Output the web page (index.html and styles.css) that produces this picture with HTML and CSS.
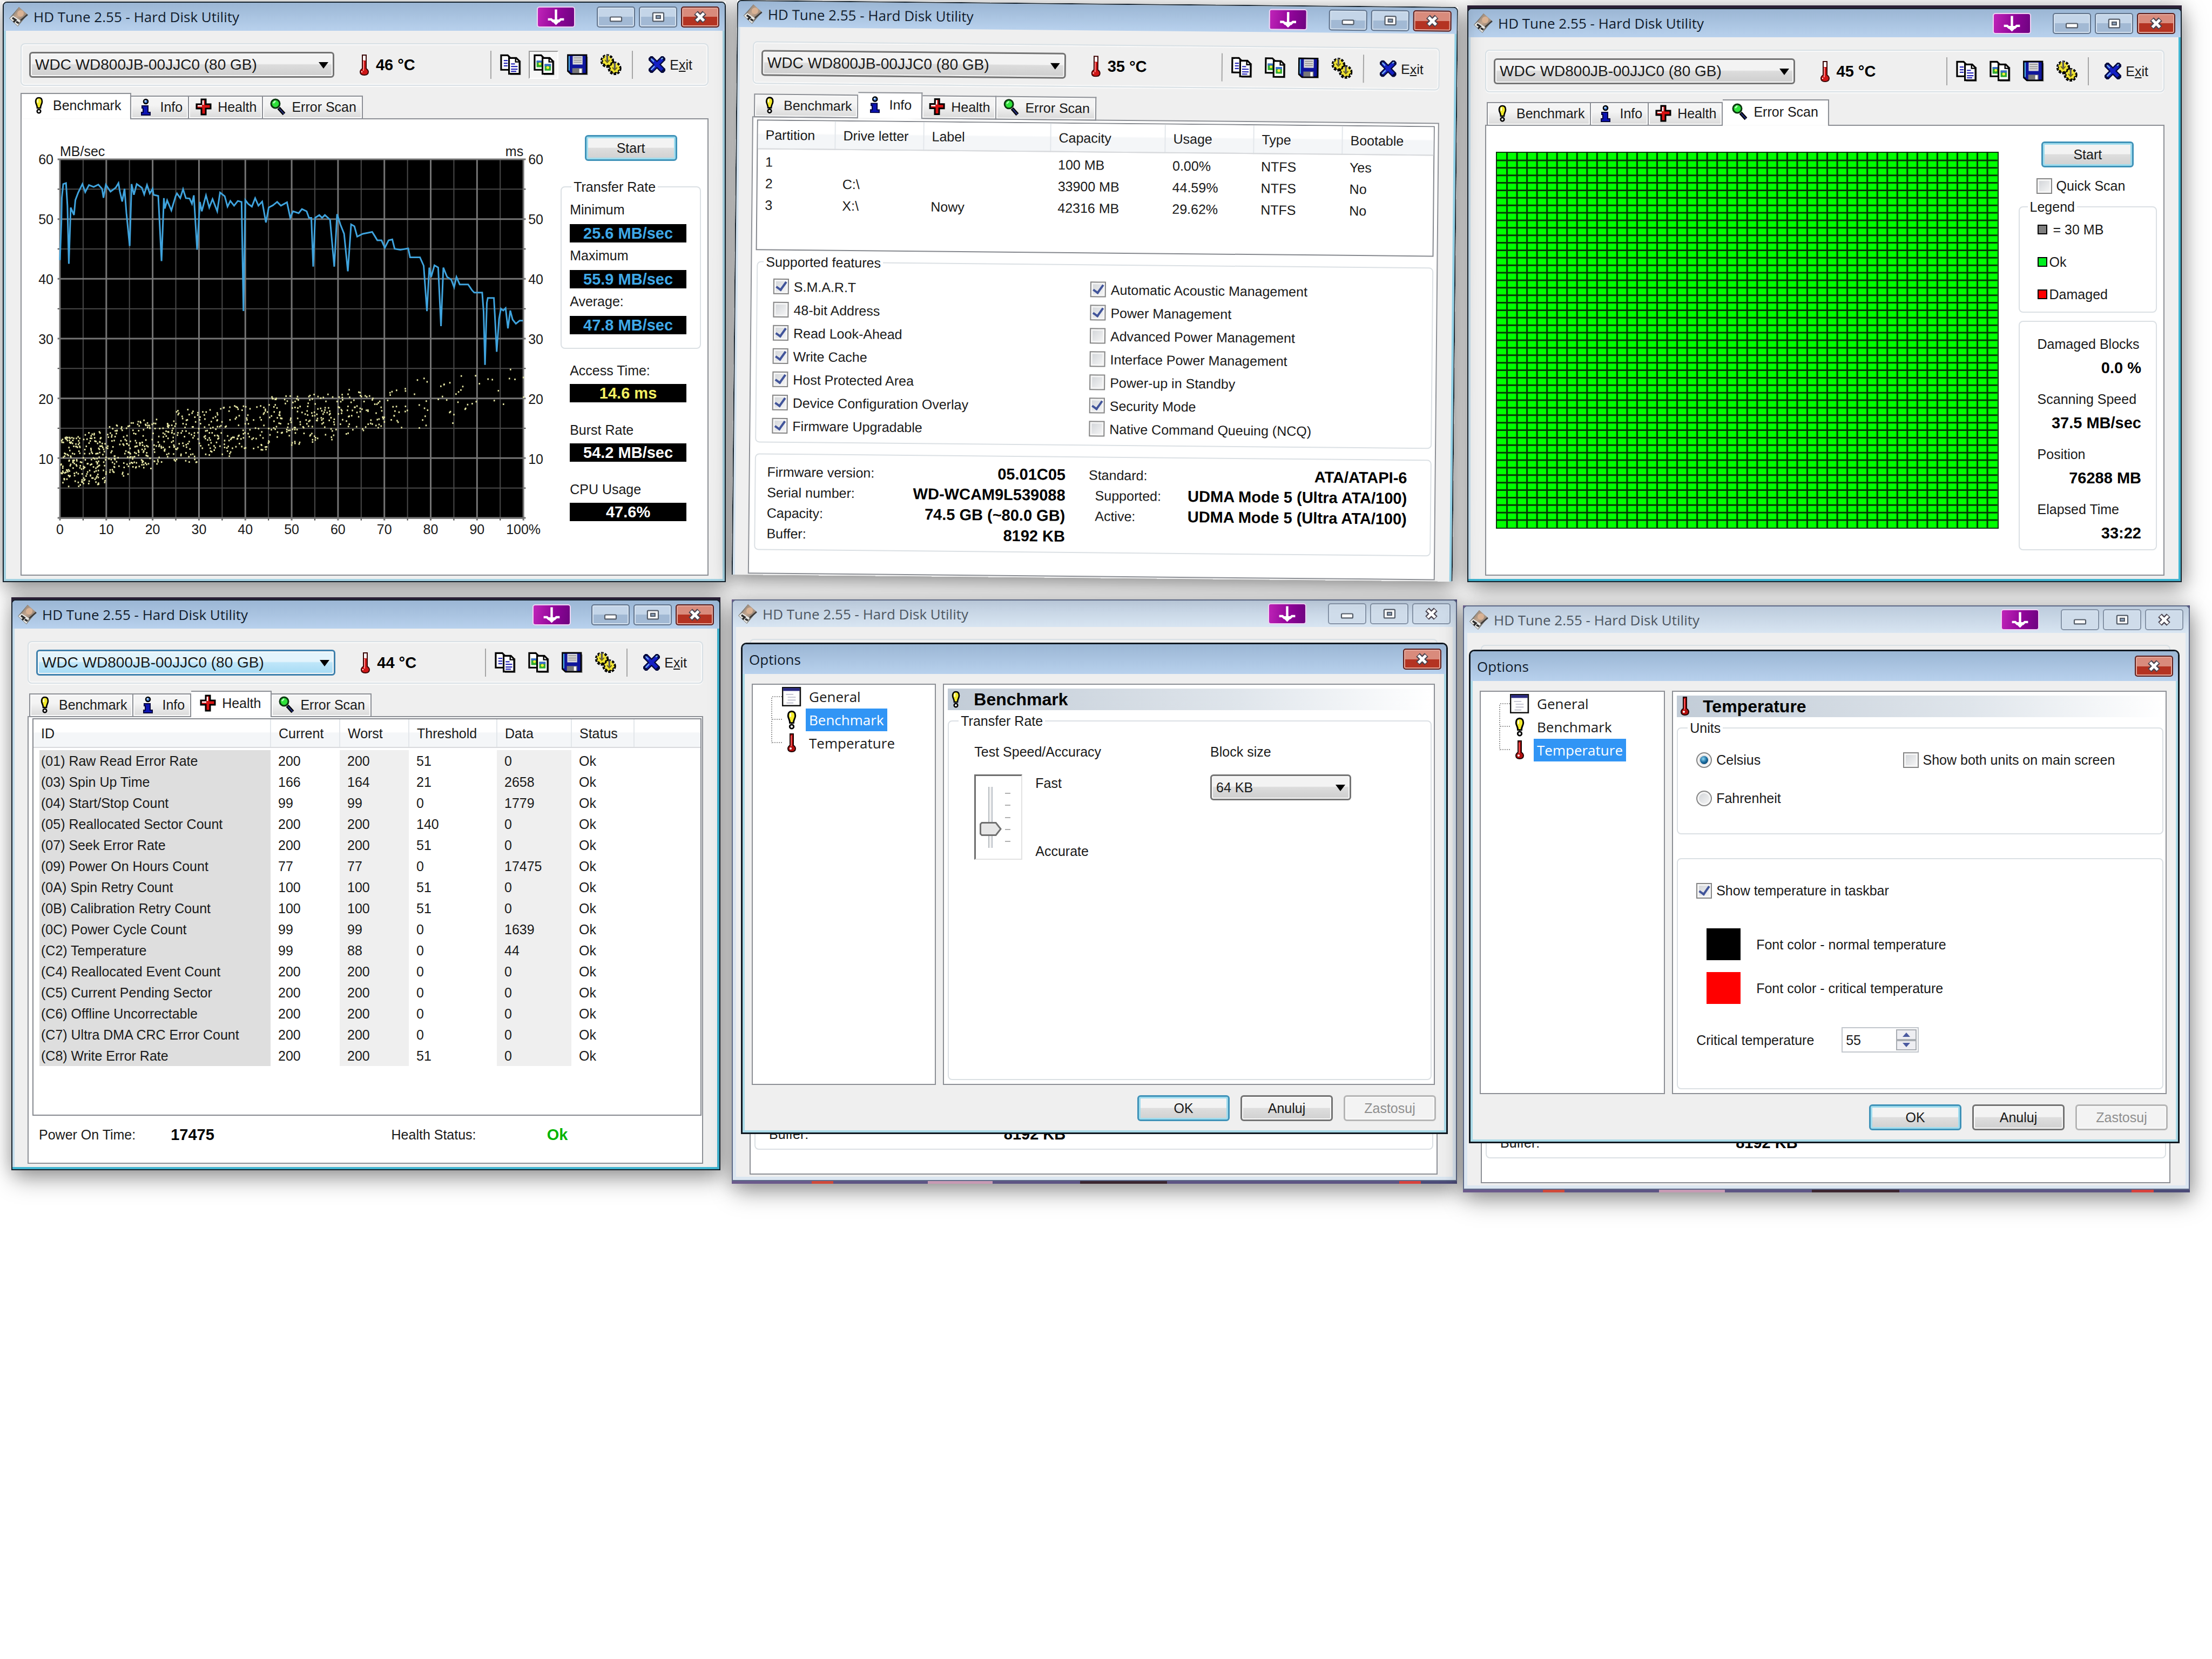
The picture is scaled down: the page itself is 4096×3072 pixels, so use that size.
FILE: index.html
```html
<!DOCTYPE html>
<html lang="en">
<head>
<meta charset="utf-8">
<title>HD Tune 2.55 - Hard Disk Utility</title>
<link rel="stylesheet" href="styles.css">
</head>
<body>
<svg class="defs" aria-hidden="true">
  <defs>
    <linearGradient id="steel" x1="0" y1="0" x2="1" y2="1"><stop offset="0" stop-color="#7b746c"/><stop offset=".5" stop-color="#c4a78f"/><stop offset="1" stop-color="#6e6a66"/></linearGradient>
    <symbol id="i-app" viewBox="0 0 36 38">
      <path d="M19 1 35 15 17 37 1 22Z" fill="#77756f"/>
      <path d="M19 1 34 14 22 26 8 17Z" fill="url(#steel)"/>
      <path d="M2 22 8 17 22 26 17 36Z" fill="#e9e9e6"/>
      <path d="M7 21l6 4-4 4M14 28l5 3" stroke="#2c2c2c" stroke-width="3.500" fill="none"/>
      <path d="M22 26 35 15" stroke="#3c3a38" stroke-width="2.500"/>
      <circle cx="22" cy="13" r="6" fill="#d9b294"/>
    </symbol>
    <symbol id="i-copy" viewBox="0 0 16 16">
      <path d="M1 1h5l2 2v9H1z" fill="#fff" stroke="#000" stroke-width="1.300"/>
      <path d="M3 5h3M3 7h3M3 9h3" stroke="#2a2ab8" stroke-width=".9"/>
      <path d="M8 15.6h7.6V5" stroke="#888" stroke-width=".8" fill="none"/>
      <path d="M7 3h5.500l2.500 2.500V15H7z" fill="#fff" stroke="#000" stroke-width="1.300"/>
      <path d="M12 3v3h3" fill="none" stroke="#000"/>
      <path d="M8.500 7.500h3M8.500 9.500h5M8.500 11.500h5M8.500 13.200h4" stroke="#2a2ab8" stroke-width=".9"/>
    </symbol>
    <symbol id="i-copyimg" viewBox="0 0 16 16">
      <path d="M1 1h5l2 2v9H1z" fill="#fff" stroke="#000" stroke-width="1.300"/>
      <path d="M2.500 5h4v5h-4z" fill="#2faa2f"/><path d="M2.500 5h4v1.500h-4z" fill="#3a6ad0"/><circle cx="5" cy="7.500" r="1" fill="#f3ef3a"/>
      <path d="M8 15.600h7.600V5" stroke="#888" stroke-width=".8" fill="none"/>
      <path d="M7 3h5.500l2.500 2.500V15H7z" fill="#fff" stroke="#000" stroke-width="1.300"/>
      <path d="M12 3v3h3" fill="none" stroke="#000"/>
      <path d="M8.600 7.600h4.800v5H8.600z" fill="#2faa2f"/><path d="M8.600 7.600h4.800v1.600H8.600z" fill="#3a6ad0"/><circle cx="11" cy="10.300" r="1.100" fill="#f3ef3a"/>
    </symbol>
    <symbol id="i-save" viewBox="0 0 16 16">
      <path d="M3 15.700h12.700V2" stroke="#999" fill="none" stroke-width=".7"/>
      <path d="M.8.800h14.200v14.200H3L.8 13z" fill="#10169c" stroke="#000" stroke-width="1.100"/>
      <path d="M1.800 1.500v11" stroke="#4fb5e6" stroke-width=".9"/>
      <path d="M4.500 1.500h7.500v6.500H4.500z" fill="#d9d9d9"/>
      <path d="M5.300 3h6M5.300 4.700h6M5.300 6.300h6" stroke="#8c8c8c" stroke-width=".6"/>
      <path d="M4.200 10.800h7.800v3.800H4.200z" fill="#777"/><path d="M9.500 11.200h1.800v3.200H9.500z" fill="#fff"/>
    </symbol>
    <symbol id="i-gears" viewBox="0 0 16 16">
      <g fill="#000" stroke="#000" stroke-width="2.400" stroke-dasharray="1.700 .9"><circle cx="5.300" cy="5.300" r="4"/><circle cx="10.900" cy="10.900" r="4"/></g>
      <g fill="#efe334" stroke="#efe334" stroke-width="1.300" stroke-dasharray="1.200 1.400"><circle cx="5.300" cy="5" r="3.200"/><circle cx="11" cy="10.600" r="3.200"/></g>
      <path d="M5.300.600v5M11 6.500v5" stroke="#55555e" stroke-width="1.300"/>
      <path d="M3.500 4.500l1.800 2 1.800-2M9.200 10.200l1.800 2 1.800-2" fill="none" stroke="#6b6414" stroke-width=".8"/>
    </symbol>
    <symbol id="i-x" viewBox="0 0 28 28">
      <path d="M5 5 23 23M23 5 5 23" stroke="#050a3c" stroke-width="9.500" stroke-linecap="square"/>
      <path d="M5 5 23 23M23 5 5 23" stroke="#1420c4" stroke-width="5.500"/>
      <path d="M4 4l5 5M4 23l6-6M21 5l3-2" stroke="#7cb8f0" stroke-width="2"/>
    </symbol>
    <symbol id="i-bulb" viewBox="0 0 30 32">
      <path d="M15 2c4 0 6 3 6 7 0 5-3 6-3 12h-6c0-6-3-7-3-12 0-4 2-7 6-7z" fill="#f2ea2a" stroke="#000" stroke-width="2.600"/>
      <path d="M13 5v6" stroke="#fff" stroke-width="2"/>
      <circle cx="15" cy="27" r="3.300" fill="#fff" stroke="#000" stroke-width="2.600"/>
    </symbol>
    <symbol id="i-info" viewBox="0 0 30 32">
      <circle cx="15" cy="6" r="4" fill="#4c86e0" stroke="#000" stroke-width="2.600"/><circle cx="14" cy="5" r="1.500" fill="#d6ecff"/>
      <path d="M8 14h11v12h4v5H7v-5h3v-8H8z" fill="#0c14b4" stroke="#00003c" stroke-width="2"/>
    </symbol>
    <symbol id="i-cross" viewBox="0 0 30 32">
      <path d="M11 2h8v9h9v8h-9v11h-8V19H2v-8h9z" fill="#d91414" stroke="#000" stroke-width="3"/>
      <path d="M14 4v8M4 14h8" stroke="#fff" stroke-width="2.600"/>
    </symbol>
    <symbol id="i-lens" viewBox="0 0 30 32">
      <path d="M17 18 27 29" stroke="#000" stroke-width="6.500"/><path d="M18 19 27 29" stroke="#26307a" stroke-width="2.500"/>
      <circle cx="11" cy="10" r="8" fill="#2fe23a" stroke="#0c3810" stroke-width="3"/><path d="M7 9l4-4" stroke="#baffc0" stroke-width="2.500"/>
    </symbol>
    <symbol id="i-therm" viewBox="0 0 22 40">
      <path d="M8 2h7v25c3 2 4 4 4 6 0 4-3 6-7.500 6S4 37 4 33c0-2 1-4 4-6z" fill="#d01616" stroke="#3a0505" stroke-width="2"/>
      <path d="M9 3h5v9H9z" fill="#fff"/><path d="M10 13v18" stroke="#ff8a8a" stroke-width="2"/><path d="M6 33h2" stroke="#fff" stroke-width="2"/>
    </symbol>
    <symbol id="i-therm-red" viewBox="0 0 30 36">
      <path d="M12 1h6v21c3 2 4 4 4 6 0 4-3 6-7 6s-7-2-7-6c0-2 1-4 4-6z" fill="#b30f0f" stroke="#1c0303" stroke-width="2"/>
      <path d="M14 4v20" stroke="#ff6060" stroke-width="2"/><circle cx="13" cy="28" r="2" fill="#fff"/>
    </symbol>
    <symbol id="i-page" viewBox="0 0 34 34">
      <path d="M1 1h31v32H1z" fill="#fff" stroke="#111" stroke-width="2.500"/><path d="M2 2h29v5H2z" fill="#2a2a80"/>
      <path d="M7 13h13M10 18h14M10 23h14M8 28h12" stroke="#b8b8c8" stroke-width="1.500"/>
    </symbol>
    <symbol id="i-down" viewBox="0 0 70 40">
      <path d="M35 4v26M18 25h7l5 5M52 25h-7l-5 5" stroke="#fff" stroke-width="5" fill="none"/><path d="M23 25h24L35 37z" fill="#fff"/>
    </symbol>
    <symbol id="i-min" viewBox="0 0 70 40"><rect x="23" y="20" width="24" height="9" rx="2" fill="#fff" stroke="#545c68" stroke-width="2.500"/></symbol>
    <symbol id="i-max" viewBox="0 0 70 40"><rect x="24" y="11" width="23" height="18" rx="2" fill="#fff" stroke="#545c68" stroke-width="2.500"/><rect x="31" y="17" width="9" height="6" fill="#8ea3bd" stroke="#545c68" stroke-width="2.500"/></symbol>
    <symbol id="i-close" viewBox="0 0 70 40">
      <path d="M26 11 44 29M44 11 26 29" stroke="#4a4450" stroke-width="11"/><path d="M27 12 43 28M43 12 27 28" stroke="#fff" stroke-width="6"/>
    </symbol>
    <symbol id="i-arrow" viewBox="0 0 18 12"><path d="M0 0h18l-9 12z" fill="#000"/></symbol>
  </defs>
</svg>

<main class="desktop">

  <!-- Benchmark -->
  <section class="shot shot-benchmark">
    <div class="window">
      <header class="titlebar">
        <svg class="app-icon"><use href="#i-app"/></svg><h2 class="title">HD Tune 2.55 - Hard Disk Utility</h2>
        <button class="cap cap-down" aria-label="Send down"><svg><use href="#i-down"/></svg></button>
        <button class="cap" aria-label="Minimize"><svg><use href="#i-min"/></svg></button>
        <button class="cap" aria-label="Maximize"><svg><use href="#i-max"/></svg></button>
        <button class="cap cap-close" aria-label="Close"><svg><use href="#i-close"/></svg></button>
      </header>
      <div class="body">
        <div class="toolbar">
          <span class="combo drive"><select aria-label="Drive"><option>WDC WD800JB-00JJC0 (80 GB)</option></select><svg><use href="#i-arrow"/></svg></span>
          <svg class="therm"><use href="#i-therm"/></svg><strong class="temp">46 °C</strong>
          <div class="tools">
            <button class="tool" aria-label="Copy text"><svg><use href="#i-copy"/></svg></button>
            <button class="tool is-pressed" aria-label="Copy screenshot"><svg><use href="#i-copyimg"/></svg></button>
            <button class="tool" aria-label="Save"><svg><use href="#i-save"/></svg></button>
            <button class="tool" aria-label="Options"><svg><use href="#i-gears"/></svg></button>
          </div>
          <button class="exit"><svg><use href="#i-x"/></svg><span>E<u>x</u>it</span></button>
        </div>
        <nav class="tabs" role="tablist">
          <button role="tab" class="tab is-active"><svg><use href="#i-bulb"/></svg>Benchmark</button>
          <button role="tab" class="tab"><svg><use href="#i-info"/></svg>Info</button>
          <button role="tab" class="tab"><svg><use href="#i-cross"/></svg>Health</button>
          <button role="tab" class="tab"><svg><use href="#i-lens"/></svg>Error Scan</button>
        </nav>
        <div class="panel bench">
          <div class="chart">
            <div class="units"><span>MB/sec</span><span>ms</span></div>
            <div class="axis-y left"><span>60</span><span>50</span><span>40</span><span>30</span><span>20</span><span>10</span></div>
            <svg class="plot" viewBox="128 853 990 1911" preserveAspectRatio="none" role="img" aria-label="Transfer rate and access time">
              <g id="plot-grid"></g>
              <path id="plot-dots"/>
              <polyline class="rate" points="128,1390 131,1190 132,1060 135,985 141,980 144,1100 147,1410 151,1110 158,1150 161,1070 167,1030 176,985 182,1028 190,990 200,1000 210,988 218,1010 221,1058 226,988 236,1025 247,1005 253,980 256,1025 261,1078 266,1010 270,1140 277,1315 281,985 286,1042 292,985 303,1005 308,1040 314,990 320,1035 326,1010 328,1042 338,1048 345,1395 350,1060 352,1115 357,1072 366,1125 375,1050 378,1035 385,1060 391,1012 397,1060 405,1062 410,1090 414,1045 421,1335 427,1080 431,1130 440,1045 447,1110 454,1065 464,1130 470,1030 480,1050 486,1105 492,1075 500,1100 508,1075 516,1080 520,1662 524,1070 530,1090 538,1105 545,1060 552,1100 560,1078 568,1190 574,1110 583,1098 592,1080 600,1100 613,1082 620,1165 626,1130 638,1140 645,1118 655,1130 660,1165 665,1165 669,1425 673,1165 682,1150 688,1165 694,1150 705,1175 714,1425 720,1145 727,1200 735,1250 743,1450 750,1200 757,1210 763,1265 775,1250 785,1245 795,1240 800,1260 806,1285 815,1285 822,1325 830,1285 838,1280 843,1330 855,1335 872,1328 876,1375 897,1375 905,1420 912,1662 917,1430 921,1480 928,1418 936,1430 942,1742 947,1430 955,1480 964,1495 970,1535 975,1480 982,1520 1000,1520 1008,1550 1013,1563 1030,1563 1033,1665 1036,1949 1040,1617 1042,1592 1055,1592 1057,1681 1061,1879 1066,1703 1070,1649 1075,1659 1080,1646 1085,1754 1090,1659 1095,1707 1102,1729 1110,1713 1117,1713"/>
            </svg>
            <div class="axis-y right"><span>60</span><span>50</span><span>40</span><span>30</span><span>20</span><span>10</span></div>
            <div class="axis-x"><span>0</span><span>10</span><span>20</span><span>30</span><span>40</span><span>50</span><span>60</span><span>70</span><span>80</span><span>90</span><span>100%</span></div>
          </div>
          <aside class="side">
            <button class="btn is-default">Start</button>
            <fieldset class="group rates"><legend>Transfer Rate</legend>
              <p>Minimum</p><output class="lcd blue">25.6 MB/sec</output>
              <p>Maximum</p><output class="lcd blue">55.9 MB/sec</output>
              <p>Average:</p><output class="lcd blue">47.8 MB/sec</output>
            </fieldset>
            <div class="reading"><p>Access Time:</p><output class="lcd yellow">14.6 ms</output></div>
            <div class="reading"><p>Burst Rate</p><output class="lcd">54.2 MB/sec</output></div>
            <div class="reading"><p>CPU Usage</p><output class="lcd">47.6%</output></div>
          </aside>
        </div>
      </div>
    </div>
  </section>

  <!-- Info -->
  <section class="shot shot-info">
    <div class="window">
      <header class="titlebar">
        <svg class="app-icon"><use href="#i-app"/></svg><h2 class="title">HD Tune 2.55 - Hard Disk Utility</h2>
        <button class="cap cap-down" aria-label="Send down"><svg><use href="#i-down"/></svg></button>
        <button class="cap" aria-label="Minimize"><svg><use href="#i-min"/></svg></button>
        <button class="cap" aria-label="Maximize"><svg><use href="#i-max"/></svg></button>
        <button class="cap cap-close" aria-label="Close"><svg><use href="#i-close"/></svg></button>
      </header>
      <div class="body">
        <div class="toolbar">
          <span class="combo drive"><select aria-label="Drive"><option>WDC WD800JB-00JJC0 (80 GB)</option></select><svg><use href="#i-arrow"/></svg></span>
          <svg class="therm"><use href="#i-therm"/></svg><strong class="temp">35 °C</strong>
          <div class="tools">
            <button class="tool" aria-label="Copy text"><svg><use href="#i-copy"/></svg></button>
            <button class="tool" aria-label="Copy screenshot"><svg><use href="#i-copyimg"/></svg></button>
            <button class="tool" aria-label="Save"><svg><use href="#i-save"/></svg></button>
            <button class="tool" aria-label="Options"><svg><use href="#i-gears"/></svg></button>
          </div>
          <button class="exit"><svg><use href="#i-x"/></svg><span>E<u>x</u>it</span></button>
        </div>
        <nav class="tabs" role="tablist">
          <button role="tab" class="tab"><svg><use href="#i-bulb"/></svg>Benchmark</button>
          <button role="tab" class="tab is-active"><svg><use href="#i-info"/></svg>Info</button>
          <button role="tab" class="tab"><svg><use href="#i-cross"/></svg>Health</button>
          <button role="tab" class="tab"><svg><use href="#i-lens"/></svg>Error Scan</button>
        </nav>
        <div class="panel info">
          <div class="listbox partitions">
            <table>
              <colgroup><col class="c-143"><col class="c-164"><col class="c-235"><col class="c-212"><col class="c-164"><col class="c-164"><col></colgroup>
              <thead><tr><th>Partition</th><th>Drive letter</th><th>Label</th><th>Capacity</th><th>Usage</th><th>Type</th><th>Bootable</th></tr></thead>
              <tbody>
                <tr><td>1</td><td></td><td></td><td>100 MB</td><td>0.00%</td><td>NTFS</td><td>Yes</td></tr>
                <tr><td>2</td><td>C:\</td><td></td><td>33900 MB</td><td>44.59%</td><td>NTFS</td><td>No</td></tr>
                <tr><td>3</td><td>X:\</td><td>Nowy</td><td>42316 MB</td><td>29.62%</td><td>NTFS</td><td>No</td></tr>
              </tbody>
            </table>
          </div>
          <fieldset class="group features"><legend>Supported features</legend>
            <label><input type="checkbox" checked>S.M.A.R.T</label>
            <label><input type="checkbox">48-bit Address</label>
            <label><input type="checkbox" checked>Read Look-Ahead</label>
            <label><input type="checkbox" checked>Write Cache</label>
            <label><input type="checkbox" checked>Host Protected Area</label>
            <label><input type="checkbox" checked>Device Configuration Overlay</label>
            <label><input type="checkbox" checked>Firmware Upgradable</label>
            <label><input type="checkbox" checked>Automatic Acoustic Management</label>
            <label><input type="checkbox" checked>Power Management</label>
            <label><input type="checkbox">Advanced Power Management</label>
            <label><input type="checkbox">Interface Power Management</label>
            <label><input type="checkbox">Power-up in Standby</label>
            <label><input type="checkbox" checked>Security Mode</label>
            <label><input type="checkbox">Native Command Queuing (NCQ)</label>
          </fieldset>
          <div class="group specs">
            <dl>
              <div><dt>Firmware version:</dt><dd>05.01C05</dd></div>
              <div><dt>Serial number:</dt><dd>WD-WCAM9L539088</dd></div>
              <div><dt>Capacity:</dt><dd>74.5 GB (~80.0 GB)</dd></div>
              <div><dt>Buffer:</dt><dd>8192 KB</dd></div>
            </dl>
            <dl>
              <div><dt>Standard:</dt><dd>ATA/ATAPI-6</dd></div>
              <div class="sub"><dt>Supported:</dt><dd>UDMA Mode 5 (Ultra ATA/100)</dd></div>
              <div class="sub"><dt>Active:</dt><dd>UDMA Mode 5 (Ultra ATA/100)</dd></div>
            </dl>
          </div>
        </div>
      </div>
    </div>
  </section>

  <!-- Error scan -->
  <section class="shot shot-scan">
    <div class="window">
      <header class="titlebar">
        <svg class="app-icon"><use href="#i-app"/></svg><h2 class="title">HD Tune 2.55 - Hard Disk Utility</h2>
        <button class="cap cap-down" aria-label="Send down"><svg><use href="#i-down"/></svg></button>
        <button class="cap" aria-label="Minimize"><svg><use href="#i-min"/></svg></button>
        <button class="cap" aria-label="Maximize"><svg><use href="#i-max"/></svg></button>
        <button class="cap cap-close" aria-label="Close"><svg><use href="#i-close"/></svg></button>
      </header>
      <div class="body">
        <div class="toolbar">
          <span class="combo drive"><select aria-label="Drive"><option>WDC WD800JB-00JJC0 (80 GB)</option></select><svg><use href="#i-arrow"/></svg></span>
          <svg class="therm"><use href="#i-therm"/></svg><strong class="temp">45 °C</strong>
          <div class="tools">
            <button class="tool" aria-label="Copy text"><svg><use href="#i-copy"/></svg></button>
            <button class="tool" aria-label="Copy screenshot"><svg><use href="#i-copyimg"/></svg></button>
            <button class="tool" aria-label="Save"><svg><use href="#i-save"/></svg></button>
            <button class="tool" aria-label="Options"><svg><use href="#i-gears"/></svg></button>
          </div>
          <button class="exit"><svg><use href="#i-x"/></svg><span>E<u>x</u>it</span></button>
        </div>
        <nav class="tabs" role="tablist">
          <button role="tab" class="tab"><svg><use href="#i-bulb"/></svg>Benchmark</button>
          <button role="tab" class="tab"><svg><use href="#i-info"/></svg>Info</button>
          <button role="tab" class="tab"><svg><use href="#i-cross"/></svg>Health</button>
          <button role="tab" class="tab is-active"><svg><use href="#i-lens"/></svg>Error Scan</button>
        </nav>
        <div class="panel scan">
          <svg class="blocks" viewBox="0 0 50 50" preserveAspectRatio="none" role="img" aria-label="Scanned blocks">
            <path id="block-lines"/>
          </svg>
          <aside class="side">
            <button class="btn is-default">Start</button>
            <label class="quick"><input type="checkbox">Quick Scan</label>
            <fieldset class="group legend"><legend>Legend</legend>
              <p><i class="chip"></i>&nbsp;= 30 MB</p>
              <p><i class="chip ok"></i>Ok</p>
              <p><i class="chip bad"></i>Damaged</p>
            </fieldset>
            <dl class="group stats">
              <dt>Damaged Blocks</dt><dd>0.0 %</dd>
              <dt>Scanning Speed</dt><dd>37.5 MB/sec</dd>
              <dt>Position</dt><dd>76288 MB</dd>
              <dt>Elapsed Time</dt><dd>33:22</dd>
            </dl>
          </aside>
        </div>
      </div>
    </div>
  </section>

  <!-- Health -->
  <section class="shot shot-health">
    <div class="window">
      <header class="titlebar">
        <svg class="app-icon"><use href="#i-app"/></svg><h2 class="title">HD Tune 2.55 - Hard Disk Utility</h2>
        <button class="cap cap-down" aria-label="Send down"><svg><use href="#i-down"/></svg></button>
        <button class="cap" aria-label="Minimize"><svg><use href="#i-min"/></svg></button>
        <button class="cap" aria-label="Maximize"><svg><use href="#i-max"/></svg></button>
        <button class="cap cap-close" aria-label="Close"><svg><use href="#i-close"/></svg></button>
      </header>
      <div class="body">
        <div class="toolbar">
          <span class="combo drive is-hot"><select aria-label="Drive"><option>WDC WD800JB-00JJC0 (80 GB)</option></select><svg><use href="#i-arrow"/></svg></span>
          <svg class="therm"><use href="#i-therm"/></svg><strong class="temp">44 °C</strong>
          <div class="tools">
            <button class="tool" aria-label="Copy text"><svg><use href="#i-copy"/></svg></button>
            <button class="tool" aria-label="Copy screenshot"><svg><use href="#i-copyimg"/></svg></button>
            <button class="tool" aria-label="Save"><svg><use href="#i-save"/></svg></button>
            <button class="tool" aria-label="Options"><svg><use href="#i-gears"/></svg></button>
          </div>
          <button class="exit"><svg><use href="#i-x"/></svg><span>E<u>x</u>it</span></button>
        </div>
        <nav class="tabs" role="tablist">
          <button role="tab" class="tab"><svg><use href="#i-bulb"/></svg>Benchmark</button>
          <button role="tab" class="tab"><svg><use href="#i-info"/></svg>Info</button>
          <button role="tab" class="tab is-active"><svg><use href="#i-cross"/></svg>Health</button>
          <button role="tab" class="tab"><svg><use href="#i-lens"/></svg>Error Scan</button>
        </nav>
        <div class="panel health">
          <div class="listbox smart">
            <table>
              <colgroup><col class="c-439"><col class="c-128"><col class="c-128"><col class="c-163"><col class="c-138"><col class="c-116"><col></colgroup>
              <thead><tr><th>ID</th><th>Current</th><th>Worst</th><th>Threshold</th><th>Data</th><th>Status</th><th class="last"></th></tr></thead>
              <tbody>
                <tr><td>(01) Raw Read Error Rate</td><td>200</td><td>200</td><td>51</td><td>0</td><td>Ok</td><td></td></tr>
                <tr><td>(03) Spin Up Time</td><td>166</td><td>164</td><td>21</td><td>2658</td><td>Ok</td><td></td></tr>
                <tr><td>(04) Start/Stop Count</td><td>99</td><td>99</td><td>0</td><td>1779</td><td>Ok</td><td></td></tr>
                <tr><td>(05) Reallocated Sector Count</td><td>200</td><td>200</td><td>140</td><td>0</td><td>Ok</td><td></td></tr>
                <tr><td>(07) Seek Error Rate</td><td>200</td><td>200</td><td>51</td><td>0</td><td>Ok</td><td></td></tr>
                <tr><td>(09) Power On Hours Count</td><td>77</td><td>77</td><td>0</td><td>17475</td><td>Ok</td><td></td></tr>
                <tr><td>(0A) Spin Retry Count</td><td>100</td><td>100</td><td>51</td><td>0</td><td>Ok</td><td></td></tr>
                <tr><td>(0B) Calibration Retry Count</td><td>100</td><td>100</td><td>51</td><td>0</td><td>Ok</td><td></td></tr>
                <tr><td>(0C) Power Cycle Count</td><td>99</td><td>99</td><td>0</td><td>1639</td><td>Ok</td><td></td></tr>
                <tr><td>(C2) Temperature</td><td>99</td><td>88</td><td>0</td><td>44</td><td>Ok</td><td></td></tr>
                <tr><td>(C4) Reallocated Event Count</td><td>200</td><td>200</td><td>0</td><td>0</td><td>Ok</td><td></td></tr>
                <tr><td>(C5) Current Pending Sector</td><td>200</td><td>200</td><td>0</td><td>0</td><td>Ok</td><td></td></tr>
                <tr><td>(C6) Offline Uncorrectable</td><td>200</td><td>200</td><td>0</td><td>0</td><td>Ok</td><td></td></tr>
                <tr><td>(C7) Ultra DMA CRC Error Count</td><td>200</td><td>200</td><td>0</td><td>0</td><td>Ok</td><td></td></tr>
                <tr><td>(C8) Write Error Rate</td><td>200</td><td>200</td><td>51</td><td>0</td><td>Ok</td><td></td></tr>
              </tbody>
            </table>
          </div>
          <div class="summary"><span>Power On Time:</span><strong>17475</strong><span>Health Status:</span><strong class="good">Ok</strong></div>
        </div>
      </div>
    </div>
  </section>

  <!-- Options: benchmark -->
  <section class="shot shot-opt shot-opt-bench">
    <div class="window is-inactive">
      <header class="titlebar">
        <svg class="app-icon"><use href="#i-app"/></svg><h2 class="title">HD Tune 2.55 - Hard Disk Utility</h2>
        <button class="cap cap-down" aria-label="Send down"><svg><use href="#i-down"/></svg></button>
        <button class="cap" aria-label="Minimize"><svg><use href="#i-min"/></svg></button>
        <button class="cap" aria-label="Maximize"><svg><use href="#i-max"/></svg></button>
        <button class="cap" aria-label="Close"><svg><use href="#i-close"/></svg></button>
      </header>
      <div class="stack">
        <div class="under">
          <div class="toolbar-edge"></div>
          <div class="panel"><div class="group"><span>Buffer:</span><strong>8192 KB</strong></div></div>
        </div>
        <div class="dialog" role="dialog" aria-label="Options">
          <header class="titlebar"><h2 class="title">Options</h2><button class="cap cap-close" aria-label="Close"><svg><use href="#i-close"/></svg></button></header>
          <div class="options">
            <ul class="tree">
              <li><svg><use href="#i-page"/></svg><a href="#general">General</a></li>
              <li><svg><use href="#i-bulb"/></svg><a href="#benchmark" class="is-selected">Benchmark</a></li>
              <li><svg><use href="#i-therm-red"/></svg><a href="#temperature">Temperature</a></li>
            </ul>
            <div class="pane">
              <h3><svg><use href="#i-bulb"/></svg>Benchmark</h3>
              <fieldset class="group speed"><legend>Transfer Rate</legend>
                <div>
                  <label for="speed">Test Speed/Accuracy</label>
                  <div class="slider-row">
                    <div class="slider"><input id="speed" type="range" min="1" max="5" value="4"><span class="ticks"><i></i><i></i><i></i><i></i><i></i></span></div>
                    <div class="ends"><span>Fast</span><span>Accurate</span></div>
                  </div>
                </div>
                <div>
                  <label for="block">Block size</label>
                  <span class="combo size"><select id="block"><option>64 KB</option></select><svg><use href="#i-arrow"/></svg></span>
                </div>
              </fieldset>
            </div>
          </div>
          <footer class="actions"><button class="btn is-default">OK</button><button class="btn">Anuluj</button><button class="btn" disabled>Zastosuj</button></footer>
        </div>
      </div>
    </div>
  </section>

  <!-- Options: temperature -->
  <section class="shot shot-opt shot-opt-temp">
    <div class="window is-inactive">
      <header class="titlebar">
        <svg class="app-icon"><use href="#i-app"/></svg><h2 class="title">HD Tune 2.55 - Hard Disk Utility</h2>
        <button class="cap cap-down" aria-label="Send down"><svg><use href="#i-down"/></svg></button>
        <button class="cap" aria-label="Minimize"><svg><use href="#i-min"/></svg></button>
        <button class="cap" aria-label="Maximize"><svg><use href="#i-max"/></svg></button>
        <button class="cap" aria-label="Close"><svg><use href="#i-close"/></svg></button>
      </header>
      <div class="stack">
        <div class="under">
          <div class="toolbar-edge"></div>
          <div class="panel"><div class="group"><span>Buffer:</span><strong>8192 KB</strong></div></div>
        </div>
        <div class="dialog" role="dialog" aria-label="Options">
          <header class="titlebar"><h2 class="title">Options</h2><button class="cap cap-close" aria-label="Close"><svg><use href="#i-close"/></svg></button></header>
          <div class="options">
            <ul class="tree">
              <li><svg><use href="#i-page"/></svg><a href="#general">General</a></li>
              <li><svg><use href="#i-bulb"/></svg><a href="#benchmark">Benchmark</a></li>
              <li><svg><use href="#i-therm-red"/></svg><a href="#temperature" class="is-selected">Temperature</a></li>
            </ul>
            <div class="pane">
              <h3><svg><use href="#i-therm-red"/></svg>Temperature</h3>
              <fieldset class="group temps"><legend>Units</legend>
                <label><input type="radio" name="unit" checked>Celsius</label>
                <label><input type="checkbox">Show both units on main screen</label>
                <label><input type="radio" name="unit">Fahrenheit</label>
              </fieldset>
              <div class="group taskbar">
                <label><input type="checkbox" checked>Show temperature in taskbar</label>
                <label class="colour"><input type="color" value="#000000">Font color - normal temperature</label>
                <label class="colour"><input type="color" value="#ff0000">Font color - critical temperature</label>
                <div class="critical"><label for="critical">Critical temperature</label>
                  <span class="spin"><input id="critical" type="number" value="55"><span><button aria-label="Increase"></button><button aria-label="Decrease" class="down"></button></span></span>
                </div>
              </div>
            </div>
          </div>
          <footer class="actions"><button class="btn is-default">OK</button><button class="btn">Anuluj</button><button class="btn" disabled>Zastosuj</button></footer>
        </div>
      </div>
    </div>
  </section>
</main>
<script src="script.js"></script>
</body>
</html>
```
FILE: styles.css
```css
* { box-sizing: border-box; }
body { margin: 0; background: #fff; color: #1a1a1a; font: 25px/30px "Liberation Sans", Arial, sans-serif; overflow-x: hidden; }
button, input, select, output { font: inherit; color: inherit; margin: 0; }
button { padding: 0; }
h2, h3, p, dl, dd, ul { margin: 0; padding: 0; }
svg { display: block; flex: none; }
.defs { position: absolute; width: 0; height: 0; }

.desktop { display: grid; grid-template-columns: 1350fr 1356fr 1390fr; row-gap: 28px; align-items: start; background: #fff; overflow: hidden; padding-bottom: 80px; }
.shot { box-shadow: 0 0 30px rgba(0,0,0,.2), 4px 16px 40px rgba(0,0,0,.35); }
.shot-benchmark { margin: 3px 6px 0 5px; }
.shot-info { margin: 0 6px 0 15px; transform: rotate(.55deg); transform-origin: 0 0; }
.shot-scan { margin: 10px 56px 0 11px; padding-top: 5px; background: #2b2036; }
.shot-health { margin: 0 16px 0 21px; padding-top: 4px; background: #2b2036; }
.shot-opt { background: linear-gradient(90deg, #6b5a8c 0 11%, #d0493a 11% 14%, #5d5484 14% 27%, #c79ab4 27% 36%, #5d5484 36% 48%, #3b2530 48% 60%, #5d5484 60% 92%, #d8413c 92% 95%, #4b4a78 95%); padding-bottom: 5px; }
.shot-opt-bench { margin: 4px 8px 0 5px; }
.shot-opt-temp { margin: 15px 41px 0 3px; }

.window { background: #efefef; border: 2px solid #16222c; border-radius: 8px 8px 0 0; box-shadow: inset 0 0 0 4px #a4d2e2; overflow: hidden; }
.shot-info .window { border-bottom: 0; box-shadow: inset -4px 0 0 #8fd0e6, inset 4px 0 0 #d3e2ef; }
.shot-scan .window, .shot-health .window { box-shadow: inset -4px -4px 0 #3fb4d0, inset 4px 0 0 #c3ddec; }
.window.is-inactive { border-color: #5e6a88; box-shadow: inset 0 0 0 6px #dbe6f1; }
.titlebar { display: flex; align-items: center; gap: 7px; height: 52px; padding: 0 10px 0 9px; background: linear-gradient(#9bb6d4, #b8d1ed); }
.shot-info .titlebar { height: 48px; }
.is-inactive > .titlebar { height: 49px; background: linear-gradient(#bccbdc, #d8e5f2); }
.app-icon { width: 36px; height: 38px; }
.title { flex: 1; margin-left: 3px; font: 26px/36px "Open Sans", "Noto Sans", sans-serif; color: #111c2c; }
.is-inactive > .titlebar .title { color: #4d5661; }
.cap { width: 71px; height: 39px; border: 2px solid #62748c; border-radius: 5px; background: linear-gradient(#c4d5e8 50%, #a2b9d4 50%); box-shadow: inset 0 0 0 2px #d4e1ef; }
.cap svg { width: 100%; height: 100%; }
.is-inactive > .titlebar .cap { background: #cfdcea; border-color: #8593a6; }
.cap-close { border-color: #5b1f1e; background: linear-gradient(#d98b7c 50%, #b43322 50%); box-shadow: inset 0 0 0 2px #e4a79b; }
.cap.cap-down, .is-inactive > .titlebar .cap-down { margin-right: 33px; border-color: #f0d2f4; background: linear-gradient(100deg, #c024b8, #8c0496 60%, #6e0480); box-shadow: none; }
.shot-health .cap-down { margin-right: 31px; }

.body { padding: 23px 30px 10px 31px; }
.shot-info .body { padding: 26px 31px 2px 28px; }
.shot-health .body { padding-left: 28px; }
.toolbar { display: flex; align-items: center; height: 79px; padding: 0 28px 0 14px; border: 2px solid #d8e0e5; border-radius: 8px; box-shadow: inset 0 0 0 2px #f9f9f9, 0 2px 0 #fafafa; }
.combo { position: relative; display: block; }
.combo select { display: block; width: 100%; height: 48px; padding: 0 8px; appearance: none; border: 3px solid #747474; border-radius: 6px; background: linear-gradient(#f3f3f3 45%, #dcdcdc 50%, #cecece); box-shadow: inset 0 0 0 2px #f8f8f8; }
.combo svg { position: absolute; right: 11px; top: 19px; width: 18px; height: 12px; pointer-events: none; }
.drive { width: 46%; flex: none; }
.drive select { font-size: 28px; }
.combo.is-hot select { border-color: #3f81ad; background: linear-gradient(#e3f4fc 45%, #bfe6f9 50%, #a5daf4); }
.therm { width: 22px; height: 40px; margin-left: 44px; }
.temp { margin-left: 11px; font-size: 29px; white-space: nowrap; color: #000; }
.tools { display: flex; gap: 7px; height: 52px; margin-left: auto; padding: 0 12px 0 7px; border: solid #a6a6a6; border-width: 0 2px; }
.tool { display: grid; place-items: center; width: 55px; height: 52px; background: none; border: 2px solid transparent; }
.tool svg { width: 40px; height: 39px; }
.tool.is-pressed { background: #f7f7f7; border-color: #9a9a9a #fff #fff #9a9a9a; }
.exit { display: flex; align-items: center; gap: 8px; margin-left: 29px; border: 0; background: none; }
.exit svg { width: 31px; height: 31px; }

.tabs { display: flex; align-items: flex-end; height: 49px; margin-top: 13px; padding-left: 3px; }
.tabs:has(.tab:first-child.is-active) { padding-left: 0; }
.tab { display: flex; align-items: center; gap: 11px; height: 44px; padding: 0 10px 2px 12px; border: 2px solid #8c8f95; border-left-width: 0; background: linear-gradient(#f4f4f4 40%, #d9d9d9); box-shadow: inset 0 0 0 2px #fbfbfb; }
.tab:first-child { border-left-width: 2px; }
.tab svg { width: 30px; height: 32px; }
.tab.is-active { position: relative; height: 49px; padding: 0 18px 6px 16px; background: #fff; border-bottom: 0; }
.tab.is-active:first-child { padding: 0 17px 6px 17px; }
.panel { background: #fff; border: 2px solid #8c8f95; margin-top: -2px; }

.group { margin: 0; padding: 0; min-width: 0; border: 2px solid #dbe0e4; border-radius: 8px; }
.group legend { margin-left: 18px; padding: 0 4px; }
.side { display: flex; flex-direction: column; }
.btn { width: 171px; height: 48px; border: 3px solid #737373; border-radius: 6px; background: linear-gradient(#f3f3f3 48%, #dedede 50%, #d0d0d0); box-shadow: inset 0 0 0 2px #fafafa; }
.btn.is-default { border-color: #3f92b8; box-shadow: inset 0 0 0 3px #9fdcee; }
.btn:disabled { color: #8f8f8f; border-color: #b5b5b5; background: #f3f3f3; }
.side .btn { align-self: center; margin-top: 29px; }
input[type=checkbox], input[type=radio] { appearance: none; flex: none; display: grid; place-items: center; width: 29px; height: 29px; border: 2px solid #858585; background: linear-gradient(135deg, #cfd2d6, #f8f8f8); box-shadow: inset 0 0 0 3px #f6f6f6; }
input[type=checkbox]:checked::after { content: ""; width: 8px; height: 16px; margin-top: -5px; border: solid #41549a; border-width: 0 4px 4px 0; transform: rotate(35deg); }
input[type=radio] { border-radius: 50%; }
input[type=radio]:checked::after { content: ""; width: 15px; height: 15px; border-radius: 50%; background: radial-gradient(circle at 40% 35%, #8fd8f4, #17689c 50%, #0c2f50); }
label { display: flex; align-items: center; gap: 8px; }

/* Benchmark */
.bench { display: grid; grid-template-columns: 987fr 259fr; column-gap: 8px; padding: 0 12px 69px 0; }
.chart { display: grid; grid-template-columns: 71px 1fr 61px; grid-template-rows: 74px 666px 34px; }
.units { grid-column: 2; align-self: end; display: flex; justify-content: space-between; }
.axis-y { grid-row: 2; display: grid; grid-template-rows: repeat(6, 1fr); }
.axis-y span { margin-top: -15px; height: 30px; }
.left { grid-column: 1; text-align: right; padding-right: 12px; }
.right { grid-column: 3; padding-left: 9px; }
.plot { grid-column: 2; grid-row: 2; width: 100%; height: 100%; background: #000; border-bottom: 2px solid #888; overflow: visible; }
.plot * { vector-effect: non-scaling-stroke; fill: none; }
.rate { stroke: #3fa3dd; stroke-width: 3px; }
.grid-minor { stroke: #484848; stroke-width: 2px; }
.grid-major { stroke: #747474; stroke-width: 3px; }
#plot-dots { stroke: #e6e6a4; stroke-width: 3px; }
.axis-x { grid-column: 2; display: flex; justify-content: space-between; padding-top: 4px; }
.axis-x span { width: 0; display: flex; justify-content: center; }
.rates { margin-top: 33px; padding: 12px 25px 25px 15px; display: grid; }
.rates legend { margin-left: 3px; }
.rates p:not(:first-of-type) { margin-top: 9px; }
.lcd { display: block; margin-top: 12px; height: 34px; background: #000; color: #fff; font: bold 29px/34px "Liberation Sans", Arial, sans-serif; text-align: center; }
.reading .lcd { margin-top: 10px; }
.reading { margin: 36px 27px 0 17px; }
.rates + .reading { margin-top: 25px; }
.blue { color: #3fa9e8; }
.yellow { color: #f4f062; }

/* Lists */
.listbox { border: 2px solid #85888e; background: #fff; }
table { width: 100%; table-layout: fixed; border-collapse: collapse; }
th { height: 52px; padding: 0 0 0 14px; text-align: left; font-weight: normal; background: linear-gradient(#fff 45%, #f4f6f8 50%); border-right: 2px solid #e3e7eb; border-bottom: 2px solid #d8dadd; }
th:last-child { border-right: 0; }
td { height: 39px; padding: 0 0 0 14px; white-space: nowrap; }
.c-116 { width: 116px; } .c-128 { width: 128px; } .c-138 { width: 138px; } .c-143 { width: 143px; } .c-163 { width: 163px; } .c-164 { width: 164px; } .c-212 { width: 212px; } .c-235 { width: 235px; } .c-439 { width: 439px; }
tbody::before { content: ""; display: block; height: 4px; }

/* Info */
.info { padding: 4px 6px 42px 7px; }
.partitions { padding-bottom: 61px; }
.partitions td { height: 40px; padding-bottom: 2px; }
.features { margin: 6px 0 0 2px; padding: 9px 0 8px 29px; display: grid; grid-auto-flow: column; grid-template: repeat(7, 43px) / 587fr 633fr; }
.features legend { margin-left: -18px; }
.features label { gap: 9px; }
.specs { display: grid; grid-template-columns: 552fr 589fr; column-gap: 43px; margin: 20px 0 0 2px; padding: 13px 43px 10px 21px; }
.specs div { display: flex; justify-content: space-between; height: 38px; align-items: center; }
.specs .sub { padding-left: 12px; }
dd, .panel strong { font-weight: bold; font-size: 29px; color: #000; }

/* Error scan */
.scan { display: grid; grid-template-columns: 929fr 256fr; column-gap: 37px; padding: 0 12px 45px 18px; }
.blocks { width: 100%; height: 698px; margin-top: 48px; background: #0f0; border: 2px solid #063806; }
.blocks path { stroke: #063806; stroke-width: 3px; vector-effect: non-scaling-stroke; }
.side .quick { margin: 19px 0 0 33px; }
.legend { margin-top: 9px; padding: 12px 0 17px 33px; display: grid; row-gap: 30px; }
.legend legend { margin-left: -18px; }
.legend p { display: flex; align-items: center; gap: 4px; }
.chip { width: 18px; height: 18px; border: 2px solid #000; background: #808080; }
.ok { background: #00f020; }
.bad { background: #f00; }
.stats { margin-top: 15px; padding: 26px 27px 15px 33px; }
.stats dd { margin-top: 14px; text-align: right; }
.stats dt:not(:first-child) { margin-top: 28px; }

/* Health */
.health { padding: 2px 1px 37px 7px; }
.smart { padding-bottom: 90px; }
.smart td:nth-child(1) { background: linear-gradient(90deg, #fff 11px, #dedede 11px); }
.smart td:nth-child(3), .smart td:nth-child(5) { background: #efefef; }
.summary { display: grid; grid-template-columns: 244fr 408fr 288fr 286fr; margin-top: 20px; padding-left: 12px; }
.summary .good { color: #00b400; }

/* Options */
.stack { display: grid; }
.stack > * { grid-area: 1 / 1; }
.under { display: flex; flex-direction: column; padding: 22px 34px 10px 31px; }
.toolbar-edge { height: 79px; border: 2px solid #d8e0e5; border-radius: 8px; }
.under .panel { flex: 1; display: flex; align-items: flex-end; padding: 0 6px 44px 7px; }
.under .group { flex: 1; display: flex; justify-content: space-between; padding: 0 54% 12px 25px; }
.dialog { margin: 29px 15px 85px 15px; background: #efefef; border: 3px solid #101820; border-radius: 10px 10px 0 0; box-shadow: inset 0 0 0 4px #a9dae8; overflow: hidden; }
.dialog .titlebar { height: 55px; padding: 0 9px; }
.options { display: grid; grid-template-columns: 341fr 910fr; column-gap: 13px; min-height: 743px; margin: 18px 21px 0 17px; }
.tree, .pane { background: #fff; border: 2px solid #8c8f95; }
.tree { list-style: none; padding: 0 0 0 34px; }
.tree li { display: flex; align-items: center; height: 43px; }
.tree li::before { content: ""; align-self: flex-start; width: 22px; height: 43px; margin-right: -2px; background: linear-gradient(90deg, transparent 50%, #999 50%) 0 21px / 4px 2px repeat-x, linear-gradient(transparent 50%, #999 50%) 0 21px / 2px 4px repeat-y; }
.tree li:first-child::before { background-size: 4px 2px, 0 0; }
.tree li:not(:first-child)::before { margin-top: -21px; height: 43px; background-position: 0 41px, 0 0; }
.tree li svg { width: 36px; height: 36px; }
.tree a { margin-left: 8px; padding: 3px 6px; font: 26px/36px "Open Sans", "Noto Sans", sans-serif; color: inherit; text-decoration: none; }
.tree .is-selected { background: #3195f5; color: #fff; }
.pane { display: flex; flex-direction: column; padding: 7px 4px 7px 7px; }
.pane h3 { display: flex; align-items: center; gap: 18px; height: 40px; font: bold 32px/40px "Liberation Sans", Arial, sans-serif; color: #000; background: linear-gradient(90deg, #c2ccd7, #dfe5eb 60%, #fff); }
.pane h3 svg { width: 30px; height: 36px; }
.speed { flex: 1; display: grid; grid-template-columns: 439fr 410fr; align-content: start; margin-top: 5px; padding: 27px 0 0 47px; }
.speed legend { margin-left: -29px; }
.slider-row { display: flex; gap: 24px; margin-top: 27px; }
.slider { display: flex; gap: 6px; width: 89px; height: 158px; padding: 20px 0 0 7px; border: solid; border-width: 3px 2px 2px 3px; border-color: #6e6e6e #e2e2e2 #e2e2e2 #6e6e6e; }
.slider input { writing-mode: vertical-lr; appearance: none; width: 41px; height: 113px; margin: 0; background: linear-gradient(90deg, #b9bec2 2px, #f2f2f2 2px 6px, #b9bec6 6px) 16px 0 / 8px 100% no-repeat; }
.slider input::-webkit-slider-thumb { appearance: none; width: 41px; height: 26px; background: url("data:image/svg+xml,%3Csvg xmlns='http://www.w3.org/2000/svg' viewBox='0 0 41 26'%3E%3Cpath d='M4 1.500h26l9 11.500-9 11.500H4L1.500 22V4z' fill='%23e6e6e6' stroke='%23707070' stroke-width='3'/%3E%3C/svg%3E"); }
.ticks { display: flex; flex-direction: column; justify-content: space-between; height: 91px; margin-top: 11px; }
.ticks i { width: 10px; height: 2px; background: #b0b0b0; }
.ends { display: flex; flex-direction: column; justify-content: space-between; padding: 1px 0 1px; }
.size { width: 261px; margin-top: 27px; }
.temps { display: grid; grid-template-columns: 382fr 480fr; row-gap: 41px; margin-top: 5px; padding: 29px 0 50px 34px; }
.temps legend { margin-left: -16px; }
.taskbar { flex: 1; margin-top: 44px; padding: 43px 0 0 34px; }
.colour { gap: 29px; margin: 22px 0 0 19px; }
label:first-child + .colour { margin-top: 55px; }
input[type=color] { appearance: none; width: 63px; height: 59px; padding: 0; border: 0; background: none; }
input[type=color]::-webkit-color-swatch-wrapper { padding: 0; }
input[type=color]::-webkit-color-swatch { border: 0; }
.critical { display: grid; grid-template-columns: 269px 1fr; align-items: center; margin-top: 43px; }
.spin { display: flex; width: 143px; height: 47px; border: 2px solid #c2c6cc; padding: 2px; background: #fff; }
.spin input { flex: 1; min-width: 0; border: 0; padding: 0 0 0 4px; appearance: textfield; background: none; }
.spin input::-webkit-inner-spin-button { appearance: none; }
.spin > span { display: grid; grid-template-rows: 1fr 1fr; width: 38px; }
.spin button { display: grid; place-items: center; border: 2px solid #a8acb2; background: #eeeef2; }
.spin button::after { content: ""; border: 7px solid transparent; border-top-width: 0; border-bottom: 8px solid #4b5aa0; }
.spin .down::after { transform: rotate(180deg); }
.actions { display: flex; justify-content: flex-end; gap: 20px; padding: 19px 19px 21px; }
.shot-opt-temp .dialog { margin: 31px 17px 84px 9px; }
.shot-opt-temp .options { min-height: 747px; }
```
FILE: script.js
```js
const SVG = 'http://www.w3.org/2000/svg';
const grid = document.getElementById('plot-grid');
const left = 128, top0 = 853, wide = 990, high = 1911;

function line(d, name) {
  const p = document.createElementNS(SVG, 'path');
  p.setAttribute('d', d);
  p.setAttribute('class', name);
  grid.appendChild(p);
}

for (const major of [false, true]) {
  const name = major ? 'grid-major' : 'grid-minor';
  for (let i = 0; i <= 20; i++) {
    if ((i % 2 === 0) !== major) continue;
    line(`M${left + wide * i / 20} ${top0}V${top0 + high + 14}`, name);
  }
  for (let i = 0; i <= 12; i++) {
    if ((i % 2 === 0) !== major) continue;
    line(`M${left - 5} ${top0 + high * i / 12}H${left + wide + 5}`, name);
  }
}

// Access-time samples per 5% of the disk: [count, lowest ms, highest ms]
const bands = [
  [110, 5.2, 13.6], [100, 5.6, 14.6], [75, 7, 15.5], [80, 8, 16.5], [65, 9, 16.5],
  [60, 9.2, 18.5], [55, 10.3, 18.6], [50, 10.3, 18.8], [42, 11, 19], [50, 12.2, 20.6],
  [55, 12, 20.8], [45, 13, 20.8], [40, 13, 21.5], [34, 14, 20.5], [20, 14.8, 22],
  [12, 14.8, 24], [11, 15.5, 23], [12, 18, 24.5], [5, 18, 24], [6, 18, 25.3]
];
let seed = 20117;
const rnd = () => (seed = (seed * 16807) % 2147483647) / 2147483647;
let dots = '';
bands.forEach(([count, low, high2], i) => {
  for (let n = 0; n < count; n++) {
    const x = left + wide * (i + rnd()) / 20;
    const ms = low + (high2 - low) * rnd();
    dots += `M${x.toFixed(1)} ${(top0 + high * (60 - ms) / 60).toFixed(1)}h3`;
  }
});
document.getElementById('plot-dots').setAttribute('d', dots);

let cells = '';
for (let i = 1; i < 50; i++) cells += `M${i} 0V50M0 ${i}H50`;
document.getElementById('block-lines').setAttribute('d', cells);
```
